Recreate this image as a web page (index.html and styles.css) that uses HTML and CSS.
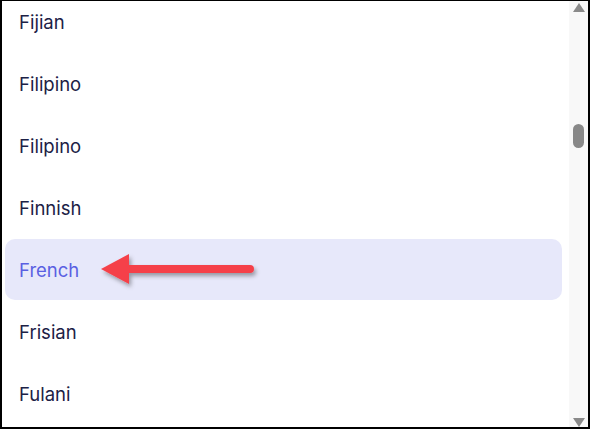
FILE: index.html
```html
<!DOCTYPE html>
<html lang="en">
<head>
    <meta charset="UTF-8">
    <title>Language list</title>
    <link rel="stylesheet" href="styles.css">
</head>
<body>
    <div class="picker">
        <div class="list-wrap">
            <ul class="lang-list">
                <li class="lang">Fijian</li>
                <li class="lang">Filipino</li>
                <li class="lang">Filipino</li>
                <li class="lang">Finnish</li>
                <li class="lang selected">
                    French
                    <svg class="pointer" width="170" height="44" viewBox="0 0 170 44">
                        <defs>
                            <filter id="shadow" x="-10%" y="-30%" width="120%" height="170%">
                                <feDropShadow dx="2" dy="3" stdDeviation="2" flood-color="#000" flood-opacity="0.35"/>
                            </filter>
                        </defs>
                        <g filter="url(#shadow)">
                            <line x1="34" y1="20" x2="155" y2="20" stroke="#f5414a" stroke-width="8" stroke-linecap="round"/>
                            <polygon points="6,20 34,5 34,35" fill="#f5414a"/>
                        </g>
                    </svg>
                </li>
                <li class="lang">Frisian</li>
                <li class="lang">Fulani</li>
            </ul>
        </div>
        <div class="scrollbar">
            <div class="arrow-up"></div>
            <div class="track">
                <div class="thumb"></div>
            </div>
            <div class="arrow-down"></div>
        </div>
    </div>
</body>
</html>
```

FILE: styles.css
```css
body {
    margin: 0;
    padding: 0;
    background-color: #fff;
    font-family: Inter, "Noto Sans", sans-serif;
}
.picker {
    width: 590px;
    height: 429px;
    box-sizing: border-box;
    border: 2px solid #000;
    border-top-width: 1px;
    display: flex;
    overflow: hidden;
}
.list-wrap {
    flex: 1;
    overflow: hidden;
    padding: 0 7px 0 3px;
}
.lang-list {
    list-style: none;
    margin: -10px 0 0;
    padding: 0;
}
.lang {
    position: relative;
    height: 61px;
    margin-bottom: 1px;
    display: flex;
    align-items: center;
    padding-left: 14px;
    font-size: 18.5px;
    color: #1c2146;
    border-radius: 10px;
}
.lang.selected {
    background-color: #e7e8fa;
    color: #5a5fe2;
}
.pointer {
    position: absolute;
    left: 90px;
    top: 10px;
}
.scrollbar {
    width: 19px;
    background-color: #f8f8f8;
    display: flex;
    flex-direction: column;
    align-items: center;
}
.arrow-up, .arrow-down {
    width: 0;
    height: 0;
    border-left: 6px solid transparent;
    border-right: 6px solid transparent;
}
.arrow-up {
    margin-top: 2px;
    border-bottom: 9px solid #8a8a8a;
}
.arrow-down {
    margin-bottom: 0;
    border-top: 9px solid #8a8a8a;
}
.track {
    flex: 1;
    width: 100%;
    display: flex;
    justify-content: center;
}
.thumb {
    width: 11px;
    height: 24px;
    margin-top: 112px;
    border-radius: 6px;
    background-color: #888;
}
```
